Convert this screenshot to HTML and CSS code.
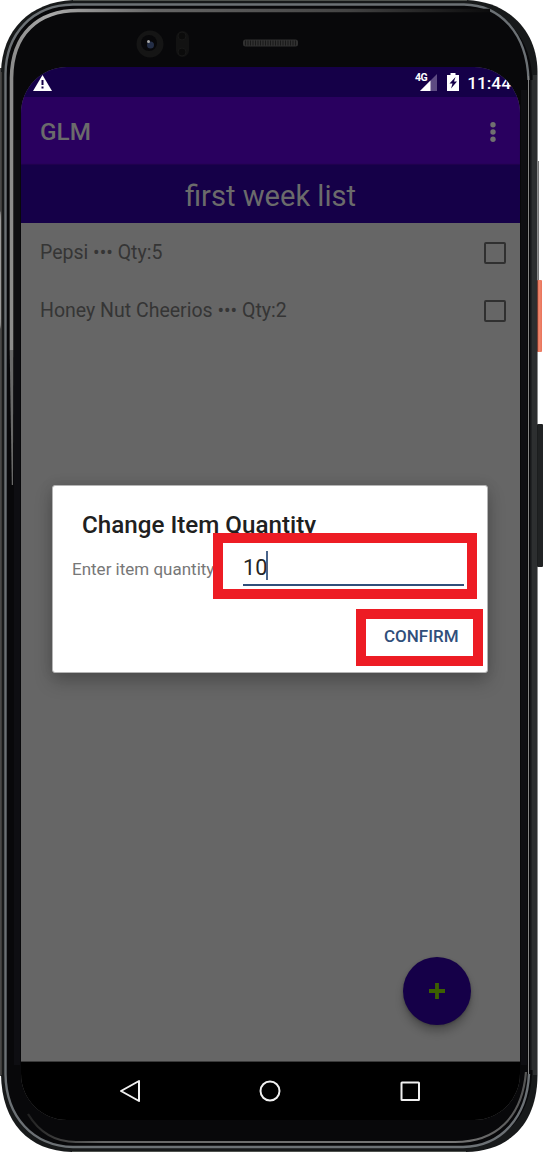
FILE: index.html
```html
<!DOCTYPE html>
<html lang="en">
<head>
<meta charset="utf-8">
<title>GLM</title>
<link rel="stylesheet" href="styles.css">
</head>
<body>
<div class="phone">
  <svg class="frame" viewBox="0 0 543 1152" aria-hidden="true">
    <defs>
      <linearGradient id="rim" x1="0" y1="0" x2="1" y2="0">
        <stop offset="0" stop-color="#8c8c8c"/><stop offset=".08" stop-color="#aaa"/><stop offset=".3" stop-color="#666"/><stop offset=".7" stop-color="#444"/><stop offset="1" stop-color="#0b0b0c"/>
      </linearGradient>
      <linearGradient id="lower" x1="0" y1="0" x2="1" y2="0">
        <stop offset="0" stop-color="#222"/><stop offset=".15" stop-color="#666"/><stop offset=".85" stop-color="#777"/><stop offset="1" stop-color="#555"/>
      </linearGradient>
      <linearGradient id="power" x1="0" y1="0" x2="1" y2="0">
        <stop offset="0" stop-color="#d9583f"/><stop offset=".45" stop-color="#f08a70"/><stop offset="1" stop-color="#e9735a"/>
      </linearGradient>
    </defs>
    <rect x="537" y="280" width="5" height="72" rx="1" fill="url(#power)"/>
    <rect x="537" y="424" width="6" height="143" rx="1" fill="#202223"/>
    <path d="M538 161h1v119h-1z" fill="#777"/>
    <path d="M0 68h2v1008H0z" fill="#484848"/>
    <path d="M0 211Q1 213 1 220V318Q1 326 0 329z" fill="#999"/>
    <path d="M73 0H467C510 2 537 32 537.500 71V1076C537 1122 511 1151 466 1152H72C28 1151 2 1122 1 1075V72C2 30 30 2 73 0z" fill="#17191a"/>
    <path d="M73 .5H467M72 1151.500H466" stroke="#4e524e" fill="none"/>
    <path d="M1.500 72V1075" stroke="#3c3a38"/>
    <path d="M535 75V1075" stroke="#2d2f30" stroke-width="4"/>
    <path d="M530.500 80V1070" stroke="#26282a"/>
    <path d="M73 4.500H464C500 5 530 35 532 76V1074C530 1117 505 1145 463 1146H73C33 1145 6 1117 5.500 1074V74C6 33 33 5 73 4.500z" fill="#08080a"/>
    <path d="M529 1074C527 1117 502 1146 463 1147H73C33 1146 6 1117 5.500 1074V74C6 33 33 5 73 4.500H464C500 5 527 33 528.500 80" fill="none" stroke="#6c7175" stroke-width="2.400"/>
    <path d="M528.500 76V1074" stroke="#858585" stroke-width="1"/>
    <path d="M533 80V1070" stroke="#2d2f30" stroke-width="5"/>
    <path d="M531 80V1070" stroke="#151719"/>
    <path d="M28 1114Q45 1142 76 1142H455C496 1142 522 1118 526 1072" fill="none" stroke="url(#lower)" stroke-width="2.200"/>
    <path d="M11.500 350V78C12 34 38 10.500 78 10.500H490" fill="none" stroke="url(#rim)" stroke-width="3.600"/>
    <path d="M9.700 350H13.300L13 485H11.800z" fill="#696969"/>
    <path d="M17 140V1065M524 90V1065" stroke="#0e0e12" stroke-width="6"/>
    <circle cx="150" cy="44" r="13.500" fill="#151515"/>
    <circle cx="149" cy="43" r="8" fill="#08080a"/>
    <circle cx="150.500" cy="45" r="3.500" fill="#242e46"/>
    <circle cx="148.500" cy="41.500" r="1.500" fill="#aaa"/>
    <rect x="176" y="31" width="13" height="26" rx="6.500" fill="#121212"/>
    <circle cx="182" cy="36" r="4" fill="#0b0b0b" stroke="#171717"/>
    <circle cx="182" cy="52" r="4" fill="#0b0b0b" stroke="#171717"/>
    <rect x="243" y="39.500" width="55" height="7" rx="2.500" fill="#303030"/>
    <path d="M245 43H297" stroke="#191919" stroke-width="5" stroke-dasharray="1 1.500"/>
  </svg>

  <main class="screen">
    <div class="status">
      <svg class="warning" viewBox="0 0 19 16"><path d="M9.500 0L19 16H0z" fill="#fff"/><path d="M9.500 5v5M9.500 11.500v2" stroke="#150048" stroke-width="2"/></svg>
      <div class="status-right">
        <span class="network">4G</span>
        <svg class="signal" viewBox="0 0 17 17"><path d="M17 0V17H0z" fill="#5d4b82"/><path d="M10.500 6.500V17H0z" fill="#fff"/></svg>
        <svg class="battery" viewBox="0 0 12 18"><path d="M3.500 0h5v2H12v16H0V2h3.500z" fill="#fff"/><path d="M8.500 4L2.500 10.500H5.500L4 15.500L10 8.500H7z" fill="#150048"/></svg>
        <span class="clock">11:44</span>
      </div>
    </div>
    <header class="toolbar">
      <h1 class="app-title">GLM</h1>
      <svg class="more" viewBox="0 0 6 20"><circle cx="3" cy="2.800" r="2.700"/><circle cx="3" cy="10" r="2.700"/><circle cx="3" cy="17.200" r="2.700"/></svg>
    </header>
    <h2 class="list-title">first week list</h2>
    <section class="content">
      <div class="item"><span>Pepsi ••• Qty:5</span><span class="checkbox"></span></div>
      <div class="item"><span>Honey Nut Cheerios ••• Qty:2</span><span class="checkbox"></span></div>
    </section>
    <nav class="navbar">
      <svg viewBox="0 0 24 24"><path d="M21 2L3 12L21 22z"/></svg>
      <svg viewBox="0 0 24 24"><circle cx="12" cy="12" r="9.500"/></svg>
      <svg viewBox="0 0 24 24"><rect x="3.500" y="3.500" width="17.500" height="17.500" rx=".5"/></svg>
    </nav>
    <div class="fab"><svg viewBox="0 0 16 16"><path d="M8 0V16M0 8H16" stroke="#3c6000" stroke-width="3.800"/></svg></div>
  </main>

  <section class="dialog">
    <h3 class="dialog-title">Change Item Quantity</h3>
    <div class="field">
      <span class="label">Enter item quantity</span>
      <div class="highlight input-mark"><div class="input"><span>10</span><i class="caret"></i></div></div>
    </div>
    <div class="highlight confirm">CONFIRM</div>
  </section>
</div>
</body>
</html>
```
FILE: styles.css
```css
* { box-sizing: border-box; }
body { margin: 0; background: #fff; font-family: Roboto, sans-serif; }
.phone { position: relative; width: 543px; height: 1152px; padding: 67px 23px 32px 21px; overflow: hidden; }
.frame { position: absolute; inset: 0; width: 543px; height: 1152px; }
.screen { position: relative; display: flex; flex-direction: column; width: 499px; height: 1053px; overflow: hidden; border-radius: 46px; background: #666; }
svg { display: block; flex: none; }
h1, h2, h3 { margin: 0; white-space: nowrap; }

.status { display: flex; align-items: center; justify-content: space-between; height: 30px; padding: 0 9px 0 12px; background: #150048; color: #fff; }
.warning { width: 19px; height: 16px; margin-top: 1px; }
.status-right { display: flex; align-items: center; }
.network { font-size: 10.500px; font-weight: 700; line-height: 10px; margin: 0 -7px 9px 0; letter-spacing: -.5px; }
.signal { width: 17px; height: 17px; margin-top: 1px; }
.battery { width: 12px; height: 18px; margin: 0 8px 0 10px; }
.clock { font-size: 17.300px; font-weight: 500; line-height: 20px; margin-top: 1px; }

.toolbar { display: flex; align-items: center; justify-content: space-between; height: 68px; padding: 1px 24px 0 19px; background: #29005f; color: #6b6b6b; box-shadow: inset 0 -1px 1px #1e004c; }
.app-title { font-size: 24.300px; line-height: 28px; font-weight: 500; }
.more { width: 6px; height: 20px; fill: #707070; }
.list-title { height: 58px; padding-top: 3px; background: #150048; color: #6b6b6b; font-size: 29.100px; line-height: 57px; font-weight: 400; text-align: center; }
.content { flex: 1; }
.item { display: flex; align-items: center; justify-content: space-between; height: 58px; padding: 1px 14px 0 19px; color: #353535; font-size: 19.500px; }
.checkbox { width: 22px; height: 22px; border: 2px solid #303030; border-radius: 2px; }
.navbar { display: flex; align-items: center; justify-content: space-between; height: 59px; padding: 0 98px 1px 97px; background: #000; border-top: 1px solid #3a3a3a; }
.navbar svg { width: 24px; height: 24px; fill: none; stroke: #f0f0f0; stroke-width: 2; stroke-linejoin: round; }
.fab { position: absolute; left: 382px; top: 890px; display: grid; place-items: center; width: 68px; height: 68px; border-radius: 50%; background: #150048; box-shadow: 0 7px 9px rgba(0,0,0,.24), 0 1px 3px rgba(0,0,0,.25); }
.fab svg { width: 16px; height: 16px; }

.dialog { position: absolute; left: 52px; top: 485px; width: 436px; height: 188px; padding: 25px 4px 0 20px; border: 1px solid #b5b5b5; border-radius: 3px; background: #fff; box-shadow: 0 9px 18px rgba(0,0,0,.22), 0 0 14px rgba(0,0,0,.1); }
.dialog-title { height: 22px; margin-left: 9px; color: #202020; font-size: 24.200px; line-height: 28px; font-weight: 500; }
.field { display: flex; height: 66px; }
.label { flex: none; width: 140px; padding-top: 26px; margin-left: -1px; color: #777; font-size: 17px; line-height: 20px; white-space: nowrap; }
.highlight { position: relative; border: 10px solid #ed1c24; background: #fff; }
.input-mark { width: 264px; height: 66px; margin-left: 1px; padding: 8px 3px 0 20px; }
.input { display: flex; height: 35px; border-bottom: 2px solid #304f7b; color: #252525; font-size: 21.700px; line-height: 33px; }
.caret { width: 2px; height: 29px; margin-left: -1px; background: #49648b; }
.confirm { width: 127px; height: 57px; margin: 10px 0 0 auto; padding: 7px 0 0 18px; color: #304f7b; font-size: 17px; line-height: 20px; font-weight: 500; }
```
